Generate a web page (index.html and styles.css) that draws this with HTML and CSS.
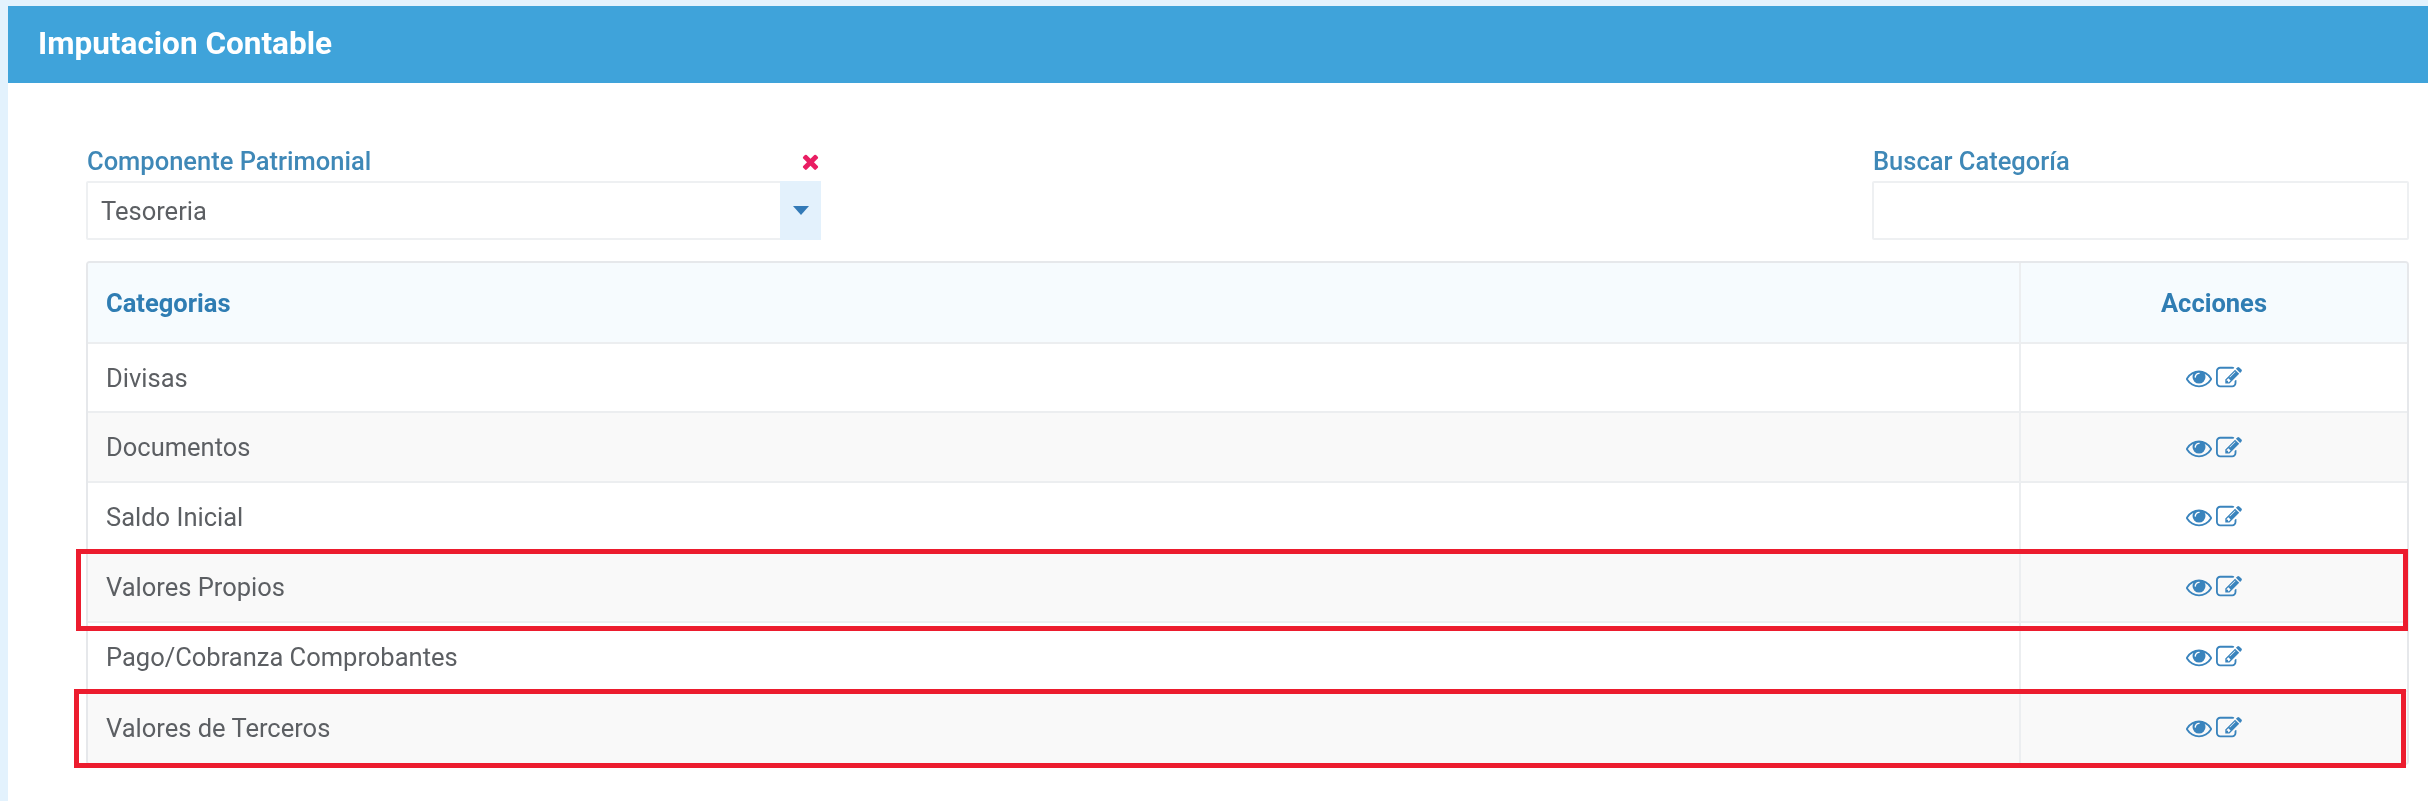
FILE: index.html
```html
<!DOCTYPE html>
<html lang="en">
  <head>
    <meta charset="UTF-8" />
    <title>Imputacion Contable</title>
    <link rel="stylesheet" href="styles.css">
  </head>
  <body>
    <svg class="sprites" width="0" height="0">
      <symbol id="i-eye" viewBox="0 0 1792 1792"><path d="M1664 960q-152-236-381-353 61 104 61 225 0 185-131.5 316.5t-316.5 131.5-316.5-131.5-131.5-316.5q0-121 61-225-229 117-381 353 133 205 333.5 326.5t434.5 121.5 434.5-121.5 333.5-326.5zm-720-384q0-20-14-34t-34-14q-125 0-214.5 89.5t-89.5 214.5q0 20 14 34t34 14 34-14 14-34q0-86 61-147t147-61q20 0 34-14t14-34zm848 384q0 34-20 69-140 230-376.5 368.5t-499.5 138.5-499.5-139-376.5-368q-20-35-20-69t20-69q140-229 376.5-368t499.5-139 499.5 139 376.5 368q20 35 20 69z"/></symbol>
      <symbol id="i-edit" viewBox="0 0 1792 1792"><path d="M888 1184l116-116-152-152-116 116v56h96v96h56zm440-720q-16-16-33 1l-350 350q-17 17-1 33t33-1l350-350q17-17 1-33zm80 594v190q0 119-84.5 203.5t-203.5 84.5h-832q-119 0-203.5-84.5t-84.5-203.5v-832q0-119 84.5-203.5t203.5-84.5h832q63 0 117 25 15 7 18 23 3 17-9 29l-49 49q-14 14-32 8-23-6-45-6h-832q-66 0-113 47t-47 113v832q0 66 47 113t113 47h832q66 0 113-47t47-113v-126q0-13 9-22l64-64q15-15 35-7t20 29zm-96-738l288 288-672 672h-288v-288zm444 132l-92 92-288-288 92-92q28-28 68-28t68 28l152 152q28 28 28 68t-28 68z"/></symbol>
    </svg>
    <div class="panel">
      <div class="panel-head">Imputacion Contable</div>
      <div class="panel-body">
        <div class="filters">
          <div class="field field-select">
            <div class="field-top">
              <label>Componente Patrimonial</label>
              <svg class="clear" viewBox="0 0 1792 1792"><path d="M1490 1322q0 40-28 68l-136 136q-28 28-68 28t-68-28l-294-294-294 294q-28 28-68 28t-68-28l-136-136q-28-28-28-68t28-68l294-294-294-294q-28-28-28-68t28-68l136-136q28-28 68-28t68 28l294 294 294-294q28-28 68-28t68 28l136 136q28 28 28 68t-28 68l-294 294 294 294q28 28 28 68z"/></svg>
            </div>
            <div class="select">
              <span class="select-value">Tesoreria</span>
              <span class="select-arrow"><i class="caret"></i></span>
            </div>
          </div>
          <div class="field field-search">
            <div class="field-top"><label>Buscar Categoría</label></div>
            <div class="search"></div>
          </div>
        </div>
        <div class="table-wrap">
          <table>
            <thead>
              <tr>
                <th>Categorias</th>
                <th class="col-actions">Acciones</th>
              </tr>
            </thead>
            <tbody>
              <tr>
                <td>Divisas</td>
                <td class="col-actions"><svg class="icon"><use href="#i-eye"/></svg><svg class="icon"><use href="#i-edit"/></svg></td>
              </tr>
              <tr class="row-mid">
                <td>Documentos</td>
                <td class="col-actions"><svg class="icon"><use href="#i-eye"/></svg><svg class="icon"><use href="#i-edit"/></svg></td>
              </tr>
              <tr>
                <td>Saldo Inicial</td>
                <td class="col-actions"><svg class="icon"><use href="#i-eye"/></svg><svg class="icon"><use href="#i-edit"/></svg></td>
              </tr>
              <tr class="row-tall">
                <td>Valores Propios</td>
                <td class="col-actions"><svg class="icon"><use href="#i-eye"/></svg><svg class="icon"><use href="#i-edit"/></svg></td>
              </tr>
              <tr>
                <td>Pago/Cobranza Comprobantes</td>
                <td class="col-actions"><svg class="icon"><use href="#i-eye"/></svg><svg class="icon"><use href="#i-edit"/></svg></td>
              </tr>
              <tr class="row-last">
                <td>Valores de Terceros</td>
                <td class="col-actions"><svg class="icon"><use href="#i-eye"/></svg><svg class="icon"><use href="#i-edit"/></svg></td>
              </tr>
            </tbody>
          </table>
        </div>
      </div>
    </div>
    <div class="mark mark-one"></div>
    <div class="mark mark-two"></div>
  </body>
</html>
```

FILE: styles.css
```css
* {
  margin: 0;
  padding: 0;
  box-sizing: border-box;
}
html,
body {
  height: 801px;
  overflow: hidden;
}
html {
  background-color: #e3f2fd;
}
/* the reference is an upscaled capture, so everything is a little soft */
body {
  position: relative;
  padding: 6px 0 0 8px;
  background-color: #e3f2fd;
  font-family: Roboto, sans-serif;
  color: #5c5f63;
  filter: blur(0.6px);
}
.sprites {
  position: absolute;
}
.panel {
  height: 795px;
  background-color: #fff;
}
.panel-head {
  height: 77px;
  padding-left: 30px;
  background-color: #3fa3da;
  color: #fff;
  font-size: 31.5px;
  font-weight: 700;
  line-height: 76px;
}
.panel-body {
  padding: 47px 19px 0 78px;
}
.filters {
  display: flex;
  justify-content: space-between;
}
.field-select {
  width: 735px;
}
.field-search {
  width: 537px;
}
.field-top {
  display: flex;
  justify-content: space-between;
  align-items: center;
  height: 51px;
  padding: 11px 1px 0;
}
.field-top label {
  color: #3f88b7;
  font-size: 25.5px;
  font-weight: 500;
}
.clear {
  width: 23px;
  height: 23px;
  margin-right: -2px;
  fill: #e91e63;
}
.select,
.search {
  height: 59px;
  border: 2px solid #eef0f2;
  border-radius: 2px;
}
.select {
  display: flex;
  justify-content: space-between;
}
.select-value {
  padding-left: 13px;
  font-size: 25.5px;
  line-height: 57px;
}
.select-arrow {
  display: flex;
  justify-content: center;
  align-items: center;
  width: 41px;
  margin: -2px -2px -2px 0;
  background-color: #e3f1fc;
}
.caret {
  width: 0;
  height: 0;
  border-top: 9px solid #337ab7;
  border-left: 8px solid transparent;
  border-right: 8px solid transparent;
}
.table-wrap {
  margin-top: 21px;
  border: 2px solid #e6e8eb;
  border-radius: 4px;
  overflow: hidden;
}
table {
  width: 100%;
  table-layout: fixed;
  border-collapse: collapse;
  font-size: 25.5px;
}
th {
  height: 80px;
  padding: 0 18px;
  background-color: #f6fbfe;
  border-bottom: 2px solid #eceef0;
  color: #2f7db3;
  font-weight: 700;
  text-align: left;
}
td {
  height: 69px;
  padding: 0 18px;
  border-top: 2px solid #eceef0;
}
tbody tr:first-child td {
  border-top: 0;
}
tbody tr:nth-child(even) {
  background-color: #f9f9f9;
}
.row-mid td {
  height: 70px;
}
.row-tall td {
  height: 71px;
}
.row-last td {
  height: 72px;
}
th.col-actions,
td.col-actions {
  width: 387px;
  border-left: 2px solid #eceef0;
  text-align: center;
}
.icon {
  width: 26px;
  height: 26px;
  margin: 0 2px 2px;
  fill: #3a84bd;
  vertical-align: middle;
}
.mark {
  position: absolute;
  border: 5px solid #ec1c2e;
}
.mark-one {
  left: 76px;
  top: 549px;
  width: 2332px;
  height: 82px;
}
.mark-two {
  left: 74px;
  top: 689px;
  width: 2332px;
  height: 79px;
}
```
